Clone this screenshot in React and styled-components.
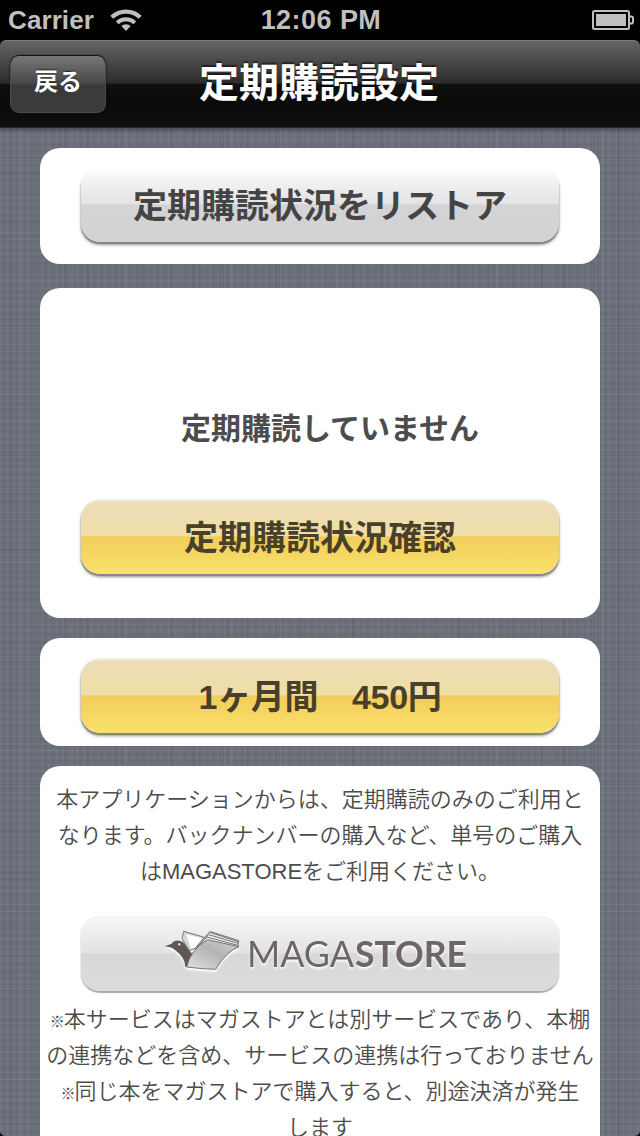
import * as React from "react"
import styled, { createGlobalStyle } from 'styled-components'

const colors = {
	black: '#000',
	white: '#fff',
	status: '#bfbfbf',
	linen: '#6b6f7a',
	text: '#4c4c4c',
	logo: '#6d6665',
}

const sans = `"Liberation Sans", "Noto Sans CJK JP", sans-serif`

const GlobalStyle = createGlobalStyle`
	*{
		box-sizing: border-box;
	}
	body{
		margin: 0;
		background: ${colors.black};
		font-family: ${sans};
	}
`

const Screen = styled.div`
	width: 640px;
	height: 1136px;
	overflow: hidden;
	display: flex;
	flex-direction: column;
	background: ${colors.black};
	border-radius: 0 0 5px 5px;
`

const StatusBar = styled.header`
	flex: none;
	height: 40px;
	padding: 0 6px 0 8px;
	display: grid;
	grid-template-columns: 1fr auto 1fr;
	align-items: center;
	color: ${colors.status};
	font-size: 26px;
	font-weight: bold;
	line-height: 40px;
	svg{
		display: block;
	}
`

const Carrier = styled.div`
	display: flex;
	align-items: center;
	gap: 16px;
	letter-spacing: .1px;
`

const Clock = styled.time`
	font-size: 27px;
	letter-spacing: .45px;
`

const Battery = styled.div`
	justify-self: end;
`

const NavBar = styled.nav`
	flex: none;
	height: 88px;
	padding: 0 12px 0 10px;
	display: grid;
	grid-template-columns: 96px 1fr 96px;
	align-items: center;
	border-top: 1px solid #7b7b7b;
	border-bottom: 1px solid #2b2b2b;
	border-radius: 6px 6px 0 0;
	background: linear-gradient(#646464, #2c2c2c 49%, #101010 50%, #0a0a0a 75%, #0f0f0f);
`

const BackButton = styled.button`
	height: 57px;
	padding: 0 0 5px;
	border: 1px solid #4b4b4b;
	border-top-color: #777;
	border-radius: 9px;
	background: linear-gradient(#757575, #464646 49%, #3a3a3a 51%, #3c3c3c);
	box-shadow: 0 -1px 1px #111, 0 0 2px #111;
	color: ${colors.white};
	font: 700 24px/1 ${sans};
	text-shadow: 0 -1px 1px #222;
`

const Title = styled.h1`
	margin: 0 0 2px;
	color: ${colors.white};
	font-size: 40px;
	font-weight: 700;
	line-height: 60px;
	text-align: center;
	text-shadow: 0 -2px 1px rgba(0, 0, 0, .5);
`

/* woven cloth: thread sets with periods that do not line up */
const Content = styled.main`
	flex: 1;
	min-height: 0;
	padding: 20px 40px 0;
	display: flex;
	flex-direction: column;
	gap: 20px;
	background:
		linear-gradient(rgba(0, 0, 0, .3), transparent 5px),
		repeating-linear-gradient(90deg, rgba(255, 255, 255, .045) 0 1px, transparent 1px 3px, rgba(0, 0, 0, .04) 3px 4px, transparent 4px 7px),
		repeating-linear-gradient(0deg, rgba(255, 255, 255, .045) 0 1px, transparent 1px 4px, rgba(0, 0, 0, .04) 4px 5px, transparent 5px 7px),
		repeating-linear-gradient(90deg, transparent 0 11px, rgba(0, 0, 0, .06) 11px 12px, transparent 12px 19px, rgba(255, 255, 255, .04) 19px 21px, transparent 21px 34px, rgba(0, 0, 0, .05) 34px 36px, transparent 36px 53px),
		repeating-linear-gradient(0deg, transparent 0 9px, rgba(255, 255, 255, .05) 9px 10px, transparent 10px 22px, rgba(0, 0, 0, .05) 22px 23px, transparent 23px 36px, rgba(255, 255, 255, .04) 36px 37px, transparent 37px 47px),
		${colors.linen};
`

const Card = styled.section`
	flex: none;
	height: ${props => props.$height || 'auto'};
	margin-bottom: ${props => props.$after || 0};
	padding: ${props => props.$padding || '20px 40px'};
	display: flex;
	flex-direction: column;
	border-radius: 20px;
	background: ${colors.white};
`

const fills = {
	silver: 'linear-gradient(#fefefe, #f4f4f5 14%, #e3e3e5 48%, #d4d4d6 50%, #d2d2d4)',
	gold: 'linear-gradient(#f3e8cf, #ebdcb5 5%, #f0dfa8 48%, #f2cd5c 50%, #f6d763 75%, #f9e26c)',
	pale: 'linear-gradient(#f7f7f7, #e2e2e2 48%, #d8d8d8 50%, #dcdcdc)',
}

const shadows = {
	silver: '0 2px 1px #858585, 0 3px 3px #999, 0 1px 2px #ddd',
	gold: '0 2px 1px #858585, 0 3px 3px #999, 0 0 2px #ccc',
	pale: '0 2px 1px #aaa, 0 0 2px #ccc',
}

const Button = styled.button`
	flex: none;
	width: 478px;
	height: 74px;
	margin: 0 1px;
	padding: 2px 0 0;
	display: flex;
	justify-content: center;
	align-items: center;
	border: none;
	border-radius: 19px;
	background: ${props => fills[props.$fill]};
	box-shadow: ${props => shadows[props.$fill]};
	color: ${props => props.$fill === 'gold' ? '#49402a' : '#444'};
	font: 700 34px/50px ${sans};
	letter-spacing: ${props => props.$tight ? '-.3px' : 'normal'};
	white-space: pre;
`

const Status = styled.p`
	margin: 0 0 46px;
	padding-left: 20px;
	color: ${colors.text};
	font-size: 30px;
	font-weight: 700;
	line-height: 50px;
	text-align: center;
`

const Note = styled.p`
	margin: 0;
	color: ${colors.text};
	font-size: 22px;
	font-weight: 350;
	line-height: 36px;
	text-align: center;
	white-space: nowrap;
`

const Mark = styled.span`
	display: inline-block;
	width: 14px;
	font-size: 15px;
	font-weight: 700;
	line-height: 1;
`

const StoreButton = styled(Button)`
	margin: 27px 0 11px 41px;
	padding: 0 10px 8px 0;
`

const WifiIcon = () => (
	<svg width="32" height="24" viewBox="0 0 32 24" fill="none" stroke={colors.status}>
		<path d="M1.8 9.3A20.4 20.4 0 0 1 30.2 9.3" strokeWidth="4.2" />
		<path d="M7.2 14.9A12.6 12.6 0 0 1 24.8 14.9" strokeWidth="4" />
		<path d="M16 23l-4.7-4.9a6.7 6.7 0 0 1 9.4 0z" fill={colors.status} stroke="none" />
	</svg>
)

const BatteryIcon = () => (
	<svg width="42" height="20" viewBox="0 0 42 20" fill="none" stroke={colors.status} strokeWidth="2">
		<rect x="1" y="1" width="36" height="18" rx="1.5" />
		<rect x="4" y="4" width="30" height="12" fill={colors.status} stroke="none" />
		<path d="M37 6.5h2.2a1.8 1.8 0 0 1 1.8 1.8v3.4a1.8 1.8 0 0 1-1.8 1.8H37" />
	</svg>
)

const Wordmark = styled.text`
	font-family: Lato, sans-serif;
	font-size: 36px;
	font-weight: ${props => props.$heavy ? 700 : 400};
	fill: ${colors.logo};
`

const LogoSvg = styled.svg`
	display: block;
	filter: drop-shadow(0 2px 1px ${colors.white});
`

/* bird whose wing is a fan of pages */
const StoreLogo = () => (
	<LogoSvg width="306" height="52" viewBox="0 0 306 52">
		<g transform="translate(-12 -20) scale(.3333)" strokeLinejoin="round" stroke="#77706f" strokeWidth="3">
			<path d="M96 104L101 82L160 99L150 128L118 140Z" fill="#d7d7d7" />
			<path d="M108 91L158 103L140 128L124 134Z" fill="#fff" stroke="none" />
			<path d="M138 130Q158 101 182 83L266 110L264 130L170 112Z" fill="#eee" />
			<path d="M144 126Q160 108 176 92L265 118M148 124Q160 110 170 99L264 124M176 84L265 113" fill="none" />
			<path d="M44 127L65 119Q73 108 87 110Q101 111 108 126Q116 140 128 151L142 139Q116 160 111 190L106 188Q106 162 76 139Q66 129 44 127Z" fill="#5f5655" stroke="none" />
			<circle cx="88" cy="121" r="3.5" fill="#fff" stroke="none" />
			<path d="M110 189Q122 136 172 107L266 128Q228 144 197 196Q154 195 110 189Z" fill="url(#wing)" />
		</g>
		<defs>
			<linearGradient id="wing" x1="0" y1="1" x2="1" y2="0">
				<stop offset="0" stopColor="#e1e1e1" />
				<stop offset=".55" stopColor="#b4b4b4" />
				<stop offset="1" stopColor="#d2d2d2" />
			</linearGradient>
		</defs>
		<Wordmark x="85" y="43" textLength="107" lengthAdjust="spacingAndGlyphs">MAGA</Wordmark>
		<Wordmark $heavy x="193" y="43" textLength="112" lengthAdjust="spacingAndGlyphs">STORE</Wordmark>
	</LogoSvg>
)

const App = () => {
	return (
		<Screen>
			<GlobalStyle />
			<StatusBar>
				<Carrier>
					Carrier
					<WifiIcon />
				</Carrier>
				<Clock>12:06 PM</Clock>
				<Battery>
					<BatteryIcon />
				</Battery>
			</StatusBar>
			<NavBar>
				<BackButton>戻る</BackButton>
				<Title>定期購読設定</Title>
			</NavBar>
			<Content>
				<Card $height="116px" $after="4px">
					<Button $fill="silver">定期購読状況をリストア</Button>
				</Card>
				<Card $height="330px" $padding="116px 40px 0">
					<Status>定期購読していません</Status>
					<Button $fill="gold">定期購読状況確認</Button>
				</Card>
				<Card $height="108px" $padding="21px 40px">
					<Button $fill="gold" $tight>{'1ヶ月間　450円'}</Button>
				</Card>
				<Card $height="420px" $padding="16px 0 0">
					<Note>
						本アプリケーションからは、定期購読のみのご利用と<br />
						なります。バックナンバーの購入など、単号のご購入<br />
						はMAGASTOREをご利用ください。
					</Note>
					<StoreButton $fill="pale" aria-label="MAGASTORE">
						<StoreLogo />
					</StoreButton>
					<Note>
						<Mark>※</Mark>本サービスはマガストアとは別サービスであり、本棚<br />
						の連携などを含め、サービスの連携は行っておりません<br />
						<Mark>※</Mark>同じ本をマガストアで購入すると、別途決済が発生<br />
						します
					</Note>
				</Card>
			</Content>
		</Screen>
	)
}

export default App
